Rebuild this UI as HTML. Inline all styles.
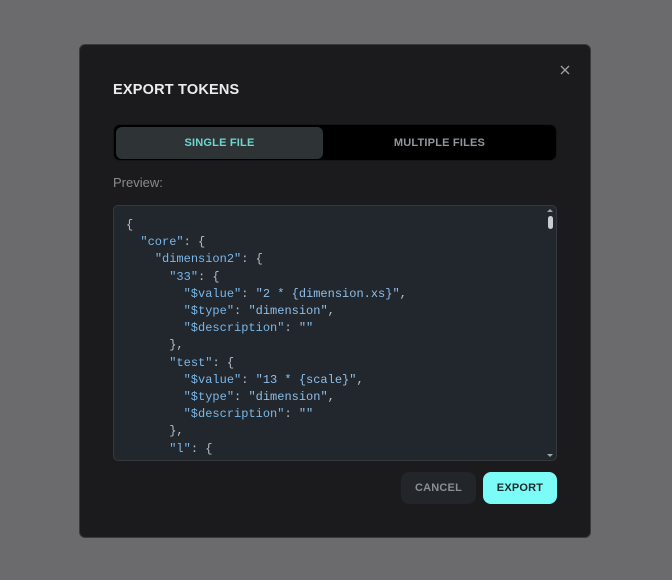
<!DOCTYPE html>
<html><head><style>
*{box-sizing:border-box;margin:0;padding:0}
body{width:672px;height:580px;background:#6b6b6d;font-family:"Liberation Sans",sans-serif;position:relative;overflow:hidden}
.modal{position:absolute;left:79px;top:44px;width:512px;height:494px;background:#1b1b1d;border:1px solid #3a3a3c;border-radius:6px}
.title{position:absolute;left:33px;top:37px;color:#ececec;font-size:14.5px;font-weight:bold;letter-spacing:.2px}
.close{position:absolute;left:480px;top:20px;width:10px;height:10px}
.tabs{position:absolute;left:33px;top:79px;width:444px;height:37px;background:#000;border-radius:7px;border:1px solid #151515}
.tab{position:absolute;top:2px;height:32px;line-height:32px;text-align:center;font-size:11px;font-weight:bold;letter-spacing:.2px}
.t1{left:2px;width:207px;background:#2e3435;border-radius:6px;color:#6fd6d0}
.t2{left:209px;width:233px;color:#8f979e}
.prev{position:absolute;left:33px;top:130px;color:#8b8b8e;font-size:13px}
.code{position:absolute;left:33px;top:160px;width:444px;height:256px;background:#22262d;border:1px solid #343941;border-radius:5px;overflow:hidden}
pre{position:absolute;left:12px;top:11px;font-family:"Liberation Mono",monospace;font-size:12px;line-height:17.2px;color:#b8bec8}
.k{color:#79b8e8}.s{color:#8fbfe8}
.sb{position:absolute;right:3px;top:10px;width:5px;height:13px;background:#c9ccd1;border-radius:3px}
.btn{position:absolute;top:427px;height:32px;line-height:32px;text-align:center;font-size:11px;font-weight:bold;border-radius:8px;letter-spacing:.2px}
.cancel{left:321px;width:75px;background:#22252a;color:#8a8f96}
.export{left:403px;width:74px;background:#7cfcf6;color:#1d2a2d}
</style></head><body>
<div class="modal">
<div class="title">EXPORT TOKENS</div>
<svg class="close" viewBox="0 0 10 10"><path d="M1 1L9 9M9 1L1 9" stroke="#a0a0a3" stroke-width="1.3"/></svg>
<div class="tabs"><div class="tab t1">SINGLE FILE</div><div class="tab t2">MULTIPLE FILES</div></div>
<div class="prev">Preview:</div>
<div class="code"><pre>{
  <span class="k">"core"</span>: {
    <span class="k">"dimension2"</span>: {
      <span class="k">"33"</span>: {
        <span class="k">"$value"</span>: <span class="s">"2 * {dimension.xs}"</span>,
        <span class="k">"$type"</span>: <span class="s">"dimension"</span>,
        <span class="k">"$description"</span>: <span class="s">""</span>
      },
      <span class="k">"test"</span>: {
        <span class="k">"$value"</span>: <span class="s">"13 * {scale}"</span>,
        <span class="k">"$type"</span>: <span class="s">"dimension"</span>,
        <span class="k">"$description"</span>: <span class="s">""</span>
      },
      <span class="k">"l"</span>: {</pre>
<svg style="position:absolute;right:3px;top:2px" width="6" height="5"><path d="M0 4L3 1L6 4Z" fill="#9aa"/></svg>
<div class="sb"></div>
<svg style="position:absolute;right:3px;bottom:2px" width="6" height="5"><path d="M0 1L3 4L6 1Z" fill="#9aa"/></svg>
</div>
<div class="btn cancel">CANCEL</div>
<div class="btn export">EXPORT</div>
</div>
</body></html>
